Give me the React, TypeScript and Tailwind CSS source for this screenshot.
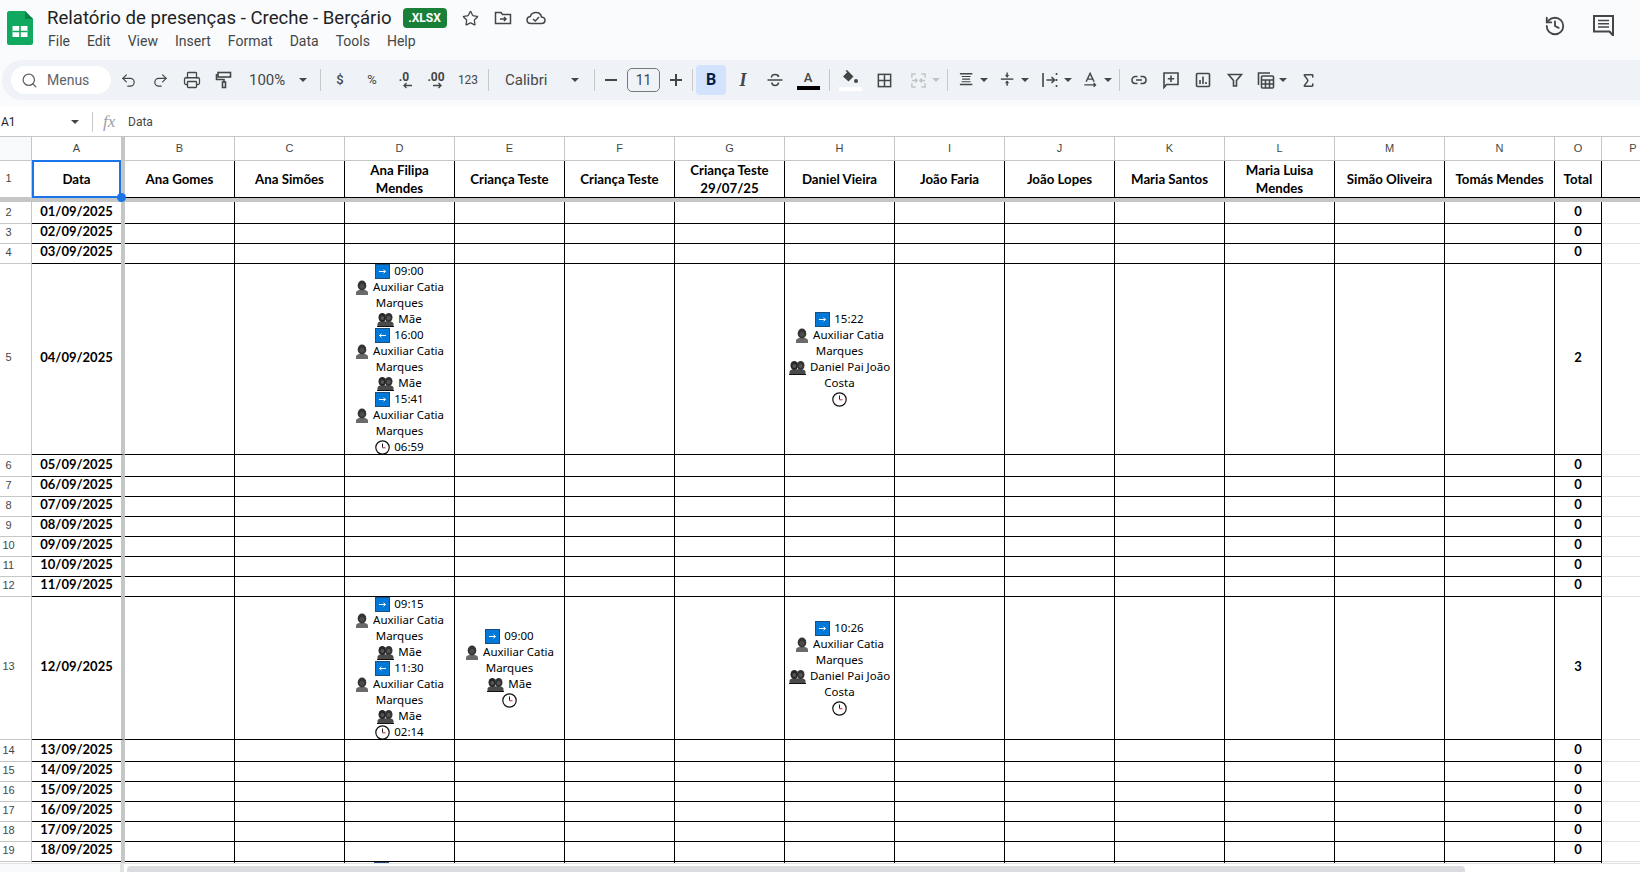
import React from "react";
import { Undo2, Redo2, Printer, Search, Star, History, Sigma } from "lucide-react";

type LineKind = "in" | "out" | "user" | "group" | "clock" | "none";
type Line = { icon: LineKind; text?: string };

const columns = ["B", "C", "D", "E", "F", "G", "H", "I", "J", "K", "L", "M", "N"];
const names = [
  "Ana Gomes",
  "Ana Simões",
  "Ana Filipa\nMendes",
  "Criança Teste",
  "Criança Teste",
  "Criança Teste\n29/07/25",
  "Daniel Vieira",
  "João Faria",
  "João Lopes",
  "Maria Santos",
  "Maria Luisa\nMendes",
  "Simão Oliveira",
  "Tomás Mendes",
];

const gridCols = "grid grid-cols-[32px_93px_repeat(13,110px)_47px_62px] w-[1664px]";

const auxiliar: Line[] = [
  { icon: "user", text: "Auxiliar Catia" },
  { icon: "none", text: "Marques" },
];

const visit = (kind: "in" | "out", time: string, who: string): Line[] => [
  { icon: kind, text: time },
  ...auxiliar,
  { icon: "group", text: who },
];

const daniel = (time: string): Line[] => [
  { icon: "in", text: time },
  ...auxiliar,
  { icon: "group", text: "Daniel Pai João" },
  { icon: "none", text: "Costa" },
  { icon: "clock" },
];

// cell contents by row number, then column letter
const rich: Record<number, Record<string, Line[]>> = {
  5: {
    D: [
      ...visit("in", "09:00", "Mãe"),
      ...visit("out", "16:00", "Mãe"),
      { icon: "in", text: "15:41" },
      ...auxiliar,
      { icon: "clock", text: "06:59" },
    ],
    H: daniel("15:22"),
  },
  13: {
    D: [
      ...visit("in", "09:15", "Mãe"),
      ...visit("out", "11:30", "Mãe"),
      { icon: "clock", text: "02:14" },
    ],
    E: [...visit("in", "09:00", "Mãe"), { icon: "clock" }],
    H: daniel("10:26"),
  },
  20: { D: [{ icon: "in" }] },
};

const heights: Record<number, string> = { 5: "h-[193px]", 13: "h-[145px]" };
const totals: Record<number, number> = { 5: 2, 13: 3 };
const rows = Array.from({ length: 19 }, (_, i) => i + 2);

const BlueBox = ({ out }: { out?: boolean }) => (
  <svg width="15" height="15" viewBox="0 0 15 15" className="shrink-0">
    <rect x="0.5" y="0.5" width="14" height="14" fill="#0078d7" stroke="#1c4f80" />
    <path d={out ? "M11 7.5H4.5M6.5 5.8L4.5 7.5L6.5 9.2" : "M4 7.5H10.5M8.5 5.8L10.5 7.5L8.5 9.2"} stroke="#fff" fill="none" />
  </svg>
);

const Person = () => (
  <svg width="14" height="15" viewBox="0 0 14 15" className="shrink-0">
    <path d="M1 15V12.5C1 11 3 10.3 4.6 9.8H9.4C11 10.3 13 11 13 12.5V15Z" fill="#6a6a6a" />
    <ellipse cx="7" cy="5.5" rx="4.3" ry="5" fill="#353535" />
    <ellipse cx="7" cy="6.4" rx="2.4" ry="2.4" fill="#4d4d4d" />
  </svg>
);

const Group = () => (
  <svg width="17" height="15" viewBox="0 0 17 15" className="shrink-0">
    <path d="M0.5 14V11.5C0.5 10.3 3 9.6 4 9.3H13C14 9.6 16.5 10.3 16.5 11.5V14Z" fill="#4a4a4a" />
    <ellipse cx="5.3" cy="5.5" rx="3.8" ry="4.6" fill="#262626" />
    <ellipse cx="11.7" cy="5.5" rx="3.8" ry="4.6" fill="#333" />
    <circle cx="5.3" cy="6" r="1.9" fill="#555" />
    <circle cx="11.7" cy="6" r="1.9" fill="#555" />
    <path d="M0 14.5H17" stroke="#111" />
  </svg>
);

const Clock = () => (
  <svg width="15" height="15" viewBox="0 0 15 15" className="shrink-0">
    <circle cx="7.5" cy="7.5" r="6.7" fill="#fff" stroke="#111" strokeWidth="1.2" />
    <path d="M7.5 3.5V7.5" stroke="#222" fill="none" />
    <path d="M7.5 7.8H10.5" stroke="#c22" fill="none" />
  </svg>
);

const RichLine = ({ line }: { line: Line }) => (
  <div className="h-4 shrink-0 flex items-center justify-center gap-[4px] whitespace-nowrap">
    {line.icon === "in" && <BlueBox />}
    {line.icon === "out" && <BlueBox out />}
    {line.icon === "user" && <Person />}
    {line.icon === "group" && <Group />}
    {line.icon === "clock" && <Clock />}
    {line.text && <span>{line.text}</span>}
    {line.icon === "in" && !line.text && <span className="w-[32px]" />}
  </div>
);

const Caret = ({ light }: { light?: boolean }) => (
  <svg width="8" height="4" viewBox="0 0 8 4" className="shrink-0">
    <path d="M0 0H8L4 4Z" fill={light ? "#c2c4c6" : "#444746"} />
  </svg>
);

const Sep = () => <div className="w-px h-[22px] bg-[#c7c7c7] shrink-0" />;

const Btn = ({ className, children }: { className: string; children: React.ReactNode }) => (
  <div className={`${className} shrink-0 h-8 flex items-center justify-center text-[#444746]`}>{children}</div>
);

const Stroke = ({ size = 18, children, color = "#444746" }: { size?: number; children: React.ReactNode; color?: string }) => (
  <svg width={size} height={size} viewBox="0 0 18 18" fill="none" stroke={color} strokeWidth="1.6">
    {children}
  </svg>
);

function Toolbar() {
  return (
    <div className="h-10 ml-[2px] pl-[9px] bg-[#eff3f8] rounded-l-[20px] flex items-center shrink-0">
      <div className="w-[100px] h-7 bg-white rounded-full flex items-center pl-[10px] gap-[9px] shrink-0 text-[#5f6368] font-[Roboto] text-sm">
        <Search size={17} strokeWidth={1.8} />
        <span>Menus</span>
      </div>
      <Btn className="w-8 ml-[1px]"><Undo2 size={17} strokeWidth={1.7} /></Btn>
      <Btn className="w-8"><Redo2 size={17} strokeWidth={1.7} /></Btn>
      <Btn className="w-8"><Printer size={18} strokeWidth={1.7} /></Btn>
      <Btn className="w-8">
        <Stroke><rect x="3" y="1.5" width="12.5" height="4.5" /><path d="M3 3.8H1.5V8.5H9V11" /><rect x="7.5" y="11" width="3" height="5.5" /></Stroke>
      </Btn>
      <div className="w-[72px] h-8 shrink-0 flex items-center justify-between pl-[9px] pr-[5px] font-[Roboto] text-[15px] text-[#444746]">
        <span>100%</span>
        <Caret />
      </div>
      <div className="w-2 shrink-0" />
      <Sep />
      <div className="w-[3px] shrink-0" />
      <Btn className="w-8 font-[Roboto] text-[13px] font-medium">$</Btn>
      <Btn className="w-8 font-[Roboto] text-[13px]">%</Btn>
      <div className="w-8 h-8 shrink-0 relative flex justify-center pt-[4px] font-[Roboto] text-[12px] font-bold text-[#444746]">
        .0
        <svg width="10" height="7" viewBox="0 0 10 7" className="absolute left-[14px] top-[18px]"><path d="M10 3.5H2M4.5 1L2 3.5L4.5 6" stroke="#444746" strokeWidth="1.3" fill="none" /></svg>
      </div>
      <div className="w-8 h-8 shrink-0 relative flex justify-center pt-[4px] font-[Roboto] text-[12px] font-bold text-[#444746]">
        .00
        <svg width="10" height="7" viewBox="0 0 10 7" className="absolute left-[13px] top-[18px]"><path d="M0 3.5H8M5.5 1L8 3.5L5.5 6" stroke="#444746" strokeWidth="1.3" fill="none" /></svg>
      </div>
      <Btn className="w-8 font-[Roboto] text-[12px]">123</Btn>
      <div className="w-[4px] shrink-0" />
      <Sep />
      <div className="w-[105px] h-8 shrink-0 flex items-center justify-between pl-[16px] pr-[15px] font-[Roboto] text-[15px] text-[#444746]">
        <span>Calibri</span>
        <Caret />
      </div>
      <Sep />
      <Btn className="w-8"><svg width="12" height="2"><rect width="12" height="2" fill="#444746" /></svg></Btn>
      <div className="w-[33px] h-6 border border-[#747775] rounded-[5px] flex items-center justify-center shrink-0 font-[Roboto] text-sm text-[#444746]">11</div>
      <Btn className="w-8"><svg width="12" height="12"><path d="M0 6H12M6 0V12" stroke="#444746" strokeWidth="2" /></svg></Btn>
      <Sep />
      <div className="w-[3px] shrink-0" />
      <div className="w-[30px] h-[30px] rounded-[4px] bg-[#d3e3fd] flex items-center justify-center shrink-0 font-[Roboto] font-bold text-[16px] text-[#041e49]">B</div>
      <div className="w-px shrink-0" />
      <Btn className="w-8 font-['Liberation_Serif'] italic font-bold text-[18px]">I</Btn>
      <Btn className="w-8">
        <Stroke><path d="M1.5 9H16.5M5.5 6.5C5.5 4 7 3.5 9 3.5C11 3.5 12.5 4 12.5 6M5.8 11.5C6 14 7.5 14.5 9 14.5C10.5 14.5 12.3 14 12.5 11.5" /></Stroke>
      </Btn>
      <div className="w-px shrink-0" />
      <Btn className="w-8 flex-col">
        <span className="font-[Roboto] text-[13px] leading-[14px] font-medium">A</span>
        <div className="w-[23px] h-[4px] bg-black mt-[1px]" />
      </Btn>
      <div className="w-[5px] shrink-0" />
      <Sep />
      <div className="w-1 shrink-0" />
      <Btn className="w-8 flex-col">
        <svg width="16" height="15" viewBox="0 0 16 15"><path d="M3.5 0.8L5 0L11.5 6.5L6.5 11.5L1 6.5L5.2 2.3Z" fill="#444746" /><circle cx="14" cy="11" r="2" fill="#444746" /></svg>
        <div className="w-[23px] h-[4px] bg-white mt-[2px]" />
      </Btn>
      <div className="w-[2px] shrink-0" />
      <Btn className="w-8">
        <Stroke size={17}><rect x="2.5" y="2.5" width="13" height="13" /><path d="M9 2.5V15.5M2.5 9H15.5" /></Stroke>
      </Btn>
      <Btn className="w-[44px] gap-[5px] pl-[5px]">
        <Stroke size={17} color="#c2c4c6"><path d="M2 6V2H6M12 2H16V6M2 12V16H6M12 16H16V12M2 9H7M5.5 7L7.5 9L5.5 11M16 9H11M12.5 7L10.5 9L12.5 11" /></Stroke>
        <Caret light />
      </Btn>
      <div className="w-[3px] shrink-0" />
      <Sep />
      <div className="w-[5px] shrink-0" />
      <Btn className="w-[41px] gap-[5px]">
        <Stroke size={16}><path d="M1 2H15M3.5 8H12.5M1 14H15" /><path d="M3 5H13M3 11H13" strokeWidth="1.2" /></Stroke>
        <Caret />
      </Btn>
      <Btn className="w-[41px] gap-[5px]">
        <Stroke size={16}><path d="M1 8H15" /><path d="M8 0.5V6M8 10V15.5" /><path d="M6 3.5H10L8 6ZM6 12.5H10L8 10Z" fill="#444746" strokeWidth="0.5" /></Stroke>
        <Caret />
      </Btn>
      <Btn className="w-[42px] gap-[5px]">
        <Stroke size={18}><path d="M2 2V16M5.5 9H13M10.5 6L13.5 9L10.5 12M15.5 2V4M15.5 8V10M15.5 14V16" /></Stroke>
        <Caret />
      </Btn>
      <Btn className="w-[40px] gap-[5px]">
        <Stroke size={16}><path d="M3.5 11L8 1.5L12.5 11M5 8H11M1.5 14.5H14M12 12.5L14 14.5L12 16.5" /></Stroke>
        <Caret />
      </Btn>
      <div className="w-[2px] shrink-0" />
      <Sep />
      <div className="w-[3px] shrink-0" />
      <Btn className="w-8">
        <Stroke><path d="M7.5 5.5H5.5C3.5 5.5 2 7 2 9C2 11 3.5 12.5 5.5 12.5H7.5M10.5 5.5H12.5C14.5 5.5 16 7 16 9C16 11 14.5 12.5 12.5 12.5H10.5M6 9H12" /></Stroke>
      </Btn>
      <Btn className="w-8">
        <Stroke><path d="M2 2H16V13.5H4.5L2 16.5ZM9 4.5V11M5.8 7.7H12.2" /></Stroke>
      </Btn>
      <Btn className="w-8">
        <Stroke><rect x="2.5" y="2.5" width="13" height="13" rx="1" /><path d="M6 13V9M9 13V5.5M12 13V11" /></Stroke>
      </Btn>
      <Btn className="w-8">
        <Stroke><path d="M2.5 3.5H15.5L10.5 9.5V15H7.5V9.5Z" /></Stroke>
      </Btn>
      <Btn className="w-[41px] gap-[4px]">
        <Stroke><path d="M1.5 14V2H13" /><rect x="4.5" y="5" width="12" height="12" rx="1" /><path d="M4.5 9H16.5M4.5 13H16.5M8.5 9V17M12.5 9V17" /></Stroke>
        <Caret />
      </Btn>
      <Btn className="w-8"><Sigma size={17} strokeWidth={2.2} /></Btn>
    </div>
  );
}

function TitleBar() {
  const menus = ["File", "Edit", "View", "Insert", "Format", "Data", "Tools", "Help"];
  return (
    <div className="h-[60px] flex shrink-0 pl-[7px] relative">
      <svg width="26" height="34" viewBox="0 0 26 34" className="mt-[11px] shrink-0">
        <path d="M2 0H18L26 8V32C26 33 25 34 24 34H2C1 34 0 33 0 32V2C0 1 1 0 2 0Z" fill="#11a95f" />
        <path d="M18 0L26 8H18Z" fill="#0b7f45" />
        <rect x="5.5" y="15" width="15" height="11" fill="#fff" />
        <path d="M5.5 20.5H20.5M13 15V26" stroke="#11a95f" strokeWidth="1.6" />
      </svg>
      <div className="ml-[14px] flex flex-col">
        <div className="flex items-center h-[20px] mt-[8px]">
          <span className="font-[Roboto] text-[18.6px] text-[#1f1f1f] leading-5 whitespace-nowrap">Relatório de presenças - Creche - Berçário</span>
          <span className="ml-[11px] w-[44px] h-[20px] rounded-[4px] bg-[#188038] text-white font-[Roboto] font-bold text-[12px] flex items-center justify-center">.XLSX</span>
          <Star size={17} strokeWidth={1.8} className="ml-[15px] text-[#444746]" />
          <svg width="18" height="16" viewBox="0 0 18 16" fill="none" stroke="#444746" strokeWidth="1.5" className="ml-[15px]">
            <path d="M1.5 13.5V2.5H7L8.5 4.5H16.5V13.5ZM6 9H12M10 7L12 9L10 11" />
          </svg>
          <svg width="20" height="16" viewBox="0 0 20 16" fill="none" stroke="#444746" strokeWidth="1.5" className="ml-[14px]">
            <path d="M5 13.5C2.5 13.5 1 12 1 10C1 8 2.5 6.7 4.3 6.5C5 4 7 2.5 10 2.5C13 2.5 15 4.5 15.5 7C17.5 7.2 19 8.5 19 10.3C19 12.2 17.5 13.5 15.5 13.5ZM7 9L9.3 11L13 7" />
          </svg>
        </div>
        <div className="flex gap-[17px] mt-[3px] ml-[1px] font-[Roboto] text-sm text-[#444746] leading-5">
          {menus.map((m) => <span key={m}>{m}</span>)}
        </div>
      </div>
      <div className="ml-auto flex items-start pt-[15px] pr-[26px] gap-[27px]">
        <History size={22} strokeWidth={2} className="text-[#444746]" />
        <svg width="21" height="21" viewBox="0 0 21 21" fill="none">
          <path d="M1 1H20V20.5L16.5 16.5H1Z" stroke="#444746" strokeWidth="2" />
          <path d="M5 5.5H16M5 8.8H16M5 12H16" stroke="#444746" strokeWidth="1.6" />
        </svg>
      </div>
    </div>
  );
}

function FormulaBar() {
  return (
    <div className="h-[29px] flex items-center shrink-0 bg-white font-[Roboto] text-xs text-[#444746] pt-[1px]">
      <span className="w-[71px] pl-[1px] text-[#1f1f1f]">A1</span>
      <Caret />
      <div className="w-px h-[20px] bg-[#c7c7c7] ml-[13px]" />
      <span className="ml-[10px] w-[25px] font-['Liberation_Serif'] italic text-[17px] text-[#9aa0a6]">fx</span>
      <span>Data</span>
    </div>
  );
}

function Grid() {
  return (
    <div className="flex-1 min-h-0 overflow-hidden bg-white font-[Lato] text-black">
      <div className={`${gridCols} h-[25px] border-t border-b border-[#c4c7c5] font-['Liberation_Sans'] text-[11px] text-[#444746]`}>
        <div className="bg-[#f8f9fa] border-r border-[#c4c7c5]" />
        <div className="border-r-4 border-[#c4c7c5] flex items-center justify-center">A</div>
        {columns.map((c) => (
          <div key={c} className="border-r border-[#c4c7c5] flex items-center justify-center">{c}</div>
        ))}
        <div className="border-r border-[#c4c7c5] flex items-center justify-center">O</div>
        <div className="flex items-center justify-center">P</div>
      </div>

      <div className={`${gridCols} h-[37px] font-bold text-[13.25px] leading-[18px] text-center`}>
        <div className="border-r border-b border-[#c4c7c5] flex items-center pb-[2px] font-['Liberation_Sans'] font-normal text-[11px] text-[#444746]">
          <span className="w-[17px]">1</span>
        </div>
        <div className="relative border-r-4 border-r-[#c4c7c5] border-b border-b-black flex items-center justify-center">
          Data
          <div className="absolute left-0 -top-px w-[89px] h-[38px] border-2 border-[#1a73e8]" />
          <div className="absolute left-[85px] top-[32px] w-[9px] h-[9px] rounded-full bg-[#1a73e8] z-10" />
        </div>
        {names.map((n, i) => (
          <div key={i} className="border-r border-b border-black flex items-center justify-center whitespace-pre-line">{n}</div>
        ))}
        <div className="border-r border-b border-black flex items-center justify-center">Total</div>
        <div className="border-b border-black" />
      </div>

      <div className={`${gridCols} h-[4px] bg-[#c4c7c5]`} />

      {rows.map((r) => {
        const day = String(r - 1).padStart(2, "0");
        const h = heights[r] ?? (r === 20 ? "h-[60px]" : "h-5");
        // row 20 is cut by the scrollbar, only the top of its first icon shows
        const last = r === 20;
        return (
          <div key={r} className={`${gridCols} ${h}`}>
            <div className="border-r border-b border-[#c4c7c5] flex items-center pb-px font-['Liberation_Sans'] text-[11px] text-[#444746]">
              {!last && <span className="w-[17px] text-center">{r}</span>}
            </div>
            <div className="border-r-4 border-r-[#c4c7c5] border-b border-b-black flex items-center justify-center pb-px font-bold text-[13px]">
              {!last && `${day}/09/2025`}
            </div>
            {columns.map((c) => {
              const lines = rich[r]?.[c];
              return (
                <div key={c} className={`border-r border-b border-black overflow-hidden flex flex-col ${last ? "pt-px" : "justify-center pt-[2px]"} font-['Noto_Sans'] text-[11.5px]`}>
                  {lines?.map((l, i) => <RichLine key={i} line={l} />)}
                </div>
              );
            })}
            <div className="border-r border-b border-black flex items-center justify-center pb-px font-bold text-[13px]">
              {!last && (totals[r] ?? 0)}
            </div>
            <div className="border-b border-[#e1e3e1]" />
          </div>
        );
      })}
    </div>
  );
}

export default function App() {
  return (
    <div className="w-[1640px] h-[872px] overflow-hidden flex flex-col bg-[#f9fbfd]">
      <TitleBar />
      <Toolbar />
      <div className="h-[7px] shrink-0" />
      <FormulaBar />
      <Grid />
      <div className="h-[9px] shrink-0 bg-white border-t border-[#e1e3e1] flex">
        <div className="w-[120px] bg-[#f8f9fa]" />
        <div className="w-[4px] bg-[#e1e3e1]" />
        <div className="ml-[3px] mt-[2px] w-[1338px] h-[7px] bg-[#dadce0] rounded-t-[4px]" />
      </div>
    </div>
  );
}
